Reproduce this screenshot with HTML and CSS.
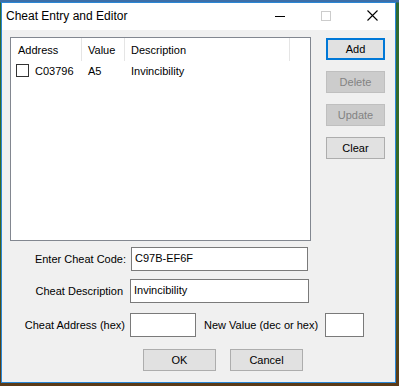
FILE: index.html
```html
<!DOCTYPE html>
<html lang="en">
<head>
    <meta charset="UTF-8">
    <title>Cheat Entry and Editor</title>
    <link rel="stylesheet" href="styles.css">
</head>
<body>
    <div class="window">
        <div class="titlebar">
            <span class="title">Cheat Entry and Editor</span>
            <div class="caption-buttons">
                <div class="cap-btn cap-min">
                    <svg class="cap-icon" width="46" height="27" viewBox="0 0 46 27"><rect x="18" y="13" width="10" height="1" fill="#000000"/></svg>
                </div>
                <div class="cap-btn">
                    <svg width="10" height="10" viewBox="0 0 10 10"><rect x="0.5" y="0.5" width="9" height="9" fill="none" stroke="#cccccc"/></svg>
                </div>
                <div class="cap-btn">
                    <svg width="11" height="11" viewBox="0 0 11 11"><path d="M0.5 0.5l10 10M10.5 0.5l-10 10" stroke="#000" stroke-width="1.1"/></svg>
                </div>
            </div>
        </div>
        <div class="client">
            <div class="main-row">
                <div class="listbox">
                    <div class="list-header">
                        <span class="col col-addr">Address</span>
                        <span class="col col-val">Value</span>
                        <span class="col col-desc">Description</span>
                        <span class="col col-rest"></span>
                    </div>
                    <div class="list-row">
                        <span class="cell cell-addr"><span class="checkbox"></span>C03796</span>
                        <span class="cell cell-val">A5</span>
                        <span class="cell cell-desc">Invincibility</span>
                    </div>
                </div>
                <div class="side-buttons">
                    <button class="btn btn-default">Add</button>
                    <button class="btn" disabled>Delete</button>
                    <button class="btn" disabled>Update</button>
                    <button class="btn">Clear</button>
                </div>
            </div>

            <div class="form-row row-code">
                <label class="label">Enter Cheat Code:</label>
                <input class="field field-code" type="text" value="C97B-EF6F">
            </div>
            <div class="form-row row-desc">
                <label class="label">Cheat Description</label>
                <input class="field field-desc" type="text" value="Invincibility">
            </div>
            <div class="form-row row-addr">
                <label class="label">Cheat Address (hex)</label>
                <input class="field field-addr" type="text" value="">
                <label class="label-value">New Value (dec or hex)</label>
                <input class="field field-value" type="text" value="">
            </div>
            <div class="dialog-buttons">
                <button class="btn btn-wide">OK</button>
                <button class="btn btn-wide">Cancel</button>
            </div>
        </div>
    </div>
</body>
</html>
```

FILE: styles.css
```css
body {
    margin: 0;
    width: 399px;
    height: 386px;
    overflow: hidden;
    background: linear-gradient(to bottom, #3d6fa8 0px, #3d6fa8 2px, #2e6a33 3px, #3a6a22 55%, #4e4a1c 85%, #5b3a18 100%);
    font-family: "Liberation Sans", Arial, sans-serif;
    font-size: 11px;
    color: #000;
}
.window {
    margin: 2px 0 0 1px;
    width: 393px;
    height: 379px;
    border: 1px solid #2a87d6;
    background: #f0f0f0;
    display: flex;
    flex-direction: column;
}
.titlebar {
    height: 27px;
    background: #fff;
    display: flex;
    align-items: center;
}
.title {
    flex-grow: 1;
    padding-left: 4px;
    font-size: 12px;
    padding-bottom: 1px;
}
.caption-buttons {
    display: flex;
    flex-shrink: 0;
    height: 100%;
}
.cap-btn {
    width: 46px;
    display: flex;
    align-items: center;
    justify-content: center;
    padding-bottom: 2px;
}
.cap-min {
    padding-bottom: 0;
}
.cap-icon {
    display: block;
}
.client {
    flex-grow: 1;
    padding: 7px 10px 0 8px;
}
.main-row {
    display: flex;
    align-items: flex-start;
}
.listbox {
    width: 301px;
    height: 204px;
    box-sizing: border-box;
    border: 1px solid #828790;
    background: #fff;
}
.list-header {
    display: flex;
    height: 23px;
    align-items: stretch;
}
.col {
    display: flex;
    align-items: center;
    padding-left: 7px;
    box-sizing: border-box;
    border-right: 1px solid #e5e5e5;
    padding-top: 1px;
}
.col-addr { width: 71px; }
.col-val { width: 43px; padding-left: 6px; }
.col-desc { width: 165px; padding-left: 6px; }
.col-rest { border-right: none; }
.list-row {
    display: flex;
    height: 17px;
    align-items: center;
    margin-top: 1px;
}
.cell {
    display: flex;
    align-items: center;
    box-sizing: border-box;
}
.cell-addr { width: 71px; padding-left: 5px; }
.cell-val { width: 43px; padding-left: 6px; }
.cell-desc { padding-left: 6px; }
.checkbox {
    width: 13px;
    height: 13px;
    box-sizing: border-box;
    border: 1px solid #333;
    background: #fff;
    margin-right: 6px;
}
.side-buttons {
    margin-left: 15px;
    margin-top: 1px;
    display: flex;
    flex-direction: column;
    gap: 11px;
}
.btn {
    font-family: "Liberation Sans", Arial, sans-serif;
    font-size: 11px;
    color: #000;
    background: #e1e1e1;
    border: 1px solid #adadad;
    width: 59px;
    height: 22px;
    padding: 0;
    margin: 0;
}
.btn-default {
    border: 2px solid #0078d7;
}
.btn:disabled {
    background: #cccccc;
    border-color: #bfbfbf;
    color: #838383;
}
.btn-wide {
    width: 73px;
}
.form-row {
    display: flex;
    align-items: center;
}
.label {
    width: 120px;
    text-align: right;
    padding-right: 5px;
    box-sizing: border-box;
    flex-shrink: 0;
}
.field {
    font-family: "Liberation Sans", Arial, sans-serif;
    font-size: 11px;
    color: #000;
    background: #fff;
    border: 1px solid #7a7a7a;
    height: 24px;
    box-sizing: border-box;
    padding: 0 0 3px 3px;
    margin: 0;
    outline: none;
}
.row-code { margin-top: 6px; }
.row-code .label { width: 121px; padding-right: 5px; }
.field-code { width: 177px; }
.row-desc { margin-top: 8px; }
.row-desc .label { padding-right: 7px; }
.field-desc { width: 179px; }
.row-addr { margin-top: 10px; }
.field-addr { width: 66px; }
.label-value {
    margin-left: 8px;
    width: 121px;
}
.field-value { width: 39px; }
.dialog-buttons {
    display: flex;
    gap: 14px;
    margin-top: 12px;
    padding-left: 133px;
}
```
